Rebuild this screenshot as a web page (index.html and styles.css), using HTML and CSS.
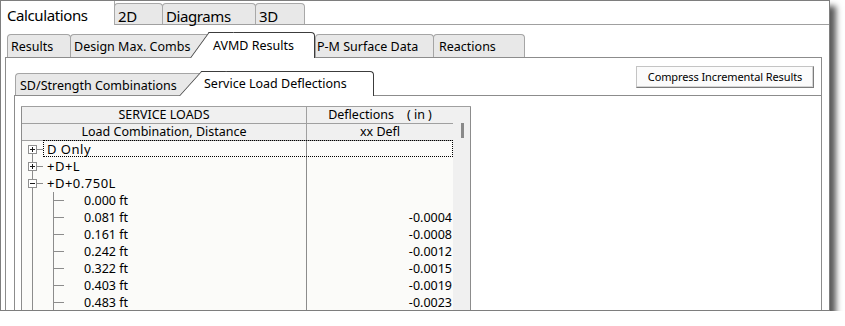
FILE: index.html
```html
<!DOCTYPE html>
<html lang="en">
<head>
    <meta charset="UTF-8">
    <title>Calculations</title>
    <link rel="stylesheet" href="styles.css">
</head>
<body>
    <div class="window">
        <!-- top level tabs -->
        <div class="top-tabs">
            <div class="top-tab active w-calc">Calculations</div>
            <div class="top-tab w-2d">2D</div>
            <div class="top-tab w-diag">Diagrams</div>
            <div class="top-tab w-3d">3D</div>
        </div>

        <div class="panel">
            <div class="tabs">
                <div class="tab w-results">Results</div>
                <div class="tab under w-design">Design Max. Combs</div>
                <div class="tab sel w-avmd">AVMD Results</div>
                <div class="tab w-pm">P-M Surface Data</div>
                <div class="tab w-react">Reactions</div>
            </div>

            <div class="panel-body">
                <div class="sub-row">
                    <div class="subtab under w-sd">SD/Strength Combinations</div>
                    <div class="subtab sel w-service">Service Load Deflections</div>
                    <div class="btn">Compress Incremental Results</div>
                </div>

                <div class="inner">
                    <div class="grid">
                        <div class="grid-main">
                            <div class="hrow">
                                <div class="c1">SERVICE LOADS</div>
                                <div class="c2 pre">Deflections    ( in )</div>
                            </div>
                            <div class="hrow">
                                <div class="c1">Load Combination, Distance</div>
                                <div class="c2">xx Defl</div>
                            </div>

                            <!-- root nodes -->
                            <div class="row focus">
                                <div class="c1">
                                    <span class="node"><span class="ln none"></span><span class="box plus"></span><span class="ln"></span></span>
                                    <span class="tick"></span>
                                    <span class="label">D Only</span>
                                </div>
                                <div class="c2"></div>
                            </div>
                            <div class="row">
                                <div class="c1">
                                    <span class="node"><span class="ln"></span><span class="box plus"></span><span class="ln"></span></span>
                                    <span class="tick"></span>
                                    <span class="label">+D+L</span>
                                </div>
                                <div class="c2"></div>
                            </div>
                            <div class="row">
                                <div class="c1">
                                    <span class="node"><span class="ln"></span><span class="box minus"></span><span class="ln"></span></span>
                                    <span class="tick"></span>
                                    <span class="label">+D+0.750L</span>
                                </div>
                                <div class="c2"></div>
                            </div>

                            <!-- children of +D+0.750L -->
                            <div class="row">
                                <div class="c1"><span class="vl"></span><span class="gap"></span><span class="vl"></span><span class="tick2"></span><span class="dist">0.000 ft</span></div>
                                <div class="c2"></div>
                            </div>
                            <div class="row">
                                <div class="c1"><span class="vl"></span><span class="gap"></span><span class="vl"></span><span class="tick2"></span><span class="dist">0.081 ft</span></div>
                                <div class="c2">-0.0004</div>
                            </div>
                            <div class="row">
                                <div class="c1"><span class="vl"></span><span class="gap"></span><span class="vl"></span><span class="tick2"></span><span class="dist">0.161 ft</span></div>
                                <div class="c2">-0.0008</div>
                            </div>
                            <div class="row">
                                <div class="c1"><span class="vl"></span><span class="gap"></span><span class="vl"></span><span class="tick2"></span><span class="dist">0.242 ft</span></div>
                                <div class="c2">-0.0012</div>
                            </div>
                            <div class="row">
                                <div class="c1"><span class="vl"></span><span class="gap"></span><span class="vl"></span><span class="tick2"></span><span class="dist">0.322 ft</span></div>
                                <div class="c2">-0.0015</div>
                            </div>
                            <div class="row">
                                <div class="c1"><span class="vl"></span><span class="gap"></span><span class="vl"></span><span class="tick2"></span><span class="dist">0.403 ft</span></div>
                                <div class="c2">-0.0019</div>
                            </div>
                            <div class="row">
                                <div class="c1"><span class="vl"></span><span class="gap"></span><span class="vl"></span><span class="tick2"></span><span class="dist">0.483 ft</span></div>
                                <div class="c2">-0.0023</div>
                            </div>
                        </div>
                        <div class="vscroll"><div class="thumb"></div></div>
                    </div>
                </div>
            </div>
        </div>
    </div>
</body>
</html>
```

FILE: styles.css
```css
body {
    margin: 0;
    background: #fff;
    font-family: "Noto Sans", "Segoe UI", sans-serif;
    font-size: 12.5px;
    color: #000;
}
.window {
    width: 830px;
    height: 311px;
    box-sizing: border-box;
    border: 1px solid #7e7e7e;
    box-shadow: 6px 6px 6px rgba(0, 0, 0, 0.65);
    background: #fff;
    display: flex;
    flex-direction: column;
    overflow: hidden;
}

/* top level tabs */
.top-tabs {
    height: 23px;
    flex-shrink: 0;
    display: flex;
    align-items: flex-end;
    border-bottom: 1px solid #a0a0a0;
}
.top-tab {
    box-sizing: border-box;
    height: 21px;
    margin-left: -1px;
    padding: 3px 0 0 3px;
    border: 1px solid #a8a8a8;
    border-bottom: none;
    border-radius: 4px 4px 0 0;
    background: #e8e8e8;
    font-size: 15px;
    line-height: 18px;
    letter-spacing: -0.4px;
    white-space: nowrap;
}
.top-tab.active {
    position: relative;
    z-index: 1;
    height: 24px;
    margin: 0 0 -1px 0;
    padding: 5px 0 0 6px;
    border: none;
    border-right: 1px solid #a8a8a8;
    border-radius: 0;
    background: #fff;
}
.w-calc { width: 114px; }
.w-2d { width: 49px; }
.w-diag { width: 94px; }
.w-3d { width: 50px; }

/* second level */
.panel {
    flex: 1;
    min-height: 0;
    display: flex;
    flex-direction: column;
    margin: 7px 7px 0 4px;
}
.tabs {
    height: 25px;
    flex-shrink: 0;
    display: flex;
    align-items: flex-end;
    padding-left: 2px;
}
.tab, .subtab {
    box-sizing: border-box;
    margin-left: -1px;
    padding: 4px 0 0 3px;
    border: 1px solid #a5a5a5;
    border-bottom: none;
    border-radius: 4px 4px 0 0;
    background: #e8e8e8;
    line-height: 15px;
    white-space: nowrap;
}
.tab { height: 23px; }
.tab:first-child { margin-left: 0; }
.under {
    border-right: none;
    border-top-right-radius: 0;
}
.sel {
    position: relative;
    z-index: 2;
    margin-left: 0;
    margin-bottom: -1px;
    border-color: #3c3c3c;
    border-left: none;
    border-radius: 0 4px 0 0;
    background: #fff;
}
/* slanted left edge of the selected tab */
.sel::before {
    content: "";
    position: absolute;
    z-index: -1;
    top: -1px;
    bottom: 0;
    width: 24px;
    background: #fff;
    border-top: 1px solid #3c3c3c;
    border-left: 1px solid #3c3c3c;
    transform-origin: bottom left;
}
.tab.sel {
    height: 26px;
    padding: 5px 0 0 4px;
}
.tab.sel::before {
    left: -19px;
    transform: skewX(-36deg);
}
.w-results { width: 64px; }
.w-design { width: 139px; padding-left: 3px; }
.w-avmd { width: 106px; }
.w-pm { width: 119px; margin-left: 0; padding-left: 1px; }
.w-react { width: 92px; padding-left: 5px; }

.panel-body {
    flex: 1;
    min-height: 0;
    display: flex;
    flex-direction: column;
    padding-left: 8px;
    border: 1px solid #8c8c8c;
    border-bottom: none;
}

/* third level */
.sub-row {
    height: 29px;
    flex-shrink: 0;
    display: flex;
    margin-top: 8px;
}
.subtab {
    align-self: flex-end;
    height: 22px;
    padding-left: 4px;
}
.subtab.under { margin-left: 1px; }
.subtab.sel {
    height: 25px;
    padding-left: 3px;
}
.subtab.sel::before {
    left: -22px;
    transform: skewX(-42deg);
}
.w-sd { width: 186px; }
.w-service { width: 173px; }

.btn {
    align-self: flex-start;
    box-sizing: border-box;
    width: 178px;
    height: 22px;
    margin: 0 7px 0 auto;
    border: 1px solid #c4c4c4;
    border-right-color: #7c7c7c;
    border-bottom-color: #7c7c7c;
    box-shadow: inset -1px -1px 0 #d4d4d4;
    background: #fbfbfb;
    font-size: 11px;
    line-height: 19px;
    letter-spacing: -0.1px;
    text-align: center;
}

.inner {
    flex: 1;
    min-height: 0;
    padding: 10px 0 0 6px;
    border-top: 1px solid #8c8c8c;
    border-left: 1px solid #8c8c8c;
}

/* results grid */
.grid {
    display: flex;
    width: 450px;
    height: 300px;
    border-top: 1px solid #a0a0a0;
}
.grid-main {
    width: 432px;
    box-sizing: border-box;
    border-left: 1px solid #8c8c8c;
    background: #fbfbf9;
}
.hrow, .row {
    display: flex;
}
.hrow {
    height: 16px;
    border-bottom: 1px solid #a0a0a0;
    background: #f0f0f0;
    line-height: 16px;
    text-align: center;
}
.hrow .c1 { border-right: 1px solid #a0a0a0; }
.c1 {
    width: 285px;
    box-sizing: border-box;
    flex-shrink: 0;
    border-right: 1px solid #8c8c8c;
}
.c2 {
    flex: 1;
}
.pre { white-space: pre; }

.row {
    position: relative;
    height: 17px;
    line-height: 17px;
}
.row .c1 { display: flex; }
.row .c2 {
    text-align: right;
    padding-right: 1px;
}
.row.focus::after {
    content: "";
    position: absolute;
    left: 21px;
    right: 0;
    top: -1px;
    bottom: 1px;
    border: 1px dotted #000;
}

/* tree lines */
.node {
    width: 9px;
    margin-left: 6px;
    display: flex;
    flex-direction: column;
}
.ln {
    flex: 1;
    background: linear-gradient(#8c8c8c, #8c8c8c) center / 1px 100% no-repeat;
}
.ln.none { background: none; }
.box {
    height: 9px;
    box-sizing: border-box;
    border: 1px solid #8f8f8f;
    background: #fff;
}
.box.plus {
    background:
        linear-gradient(#1a1a1a, #1a1a1a) center / 5px 1px no-repeat,
        linear-gradient(#1a1a1a, #1a1a1a) center / 1px 5px no-repeat,
        #fff;
}
.box.minus {
    background: linear-gradient(#1a1a1a, #1a1a1a) center / 5px 1px no-repeat, #fff;
}
.tick, .tick2 {
    background: linear-gradient(#8c8c8c, #8c8c8c) center / 100% 1px no-repeat;
}
.tick { width: 6px; }
.tick2 { width: 10px; }
.label {
    margin-left: 4px;
    font-size: 13px;
    letter-spacing: 0.5px;
}
.vl {
    width: 1px;
    background: #8c8c8c;
}
.vl:first-child { margin-left: 10px; }
.gap { width: 20px; }
.dist { margin-left: 20px; }

.vscroll {
    width: 18px;
    box-sizing: border-box;
    border-right: 1px solid #8c8c8c;
    background: #f0f0f0;
    padding: 16px 0 0 8px;
}
.thumb {
    width: 3px;
    height: 15px;
    background: #8a8a8a;
}
```
